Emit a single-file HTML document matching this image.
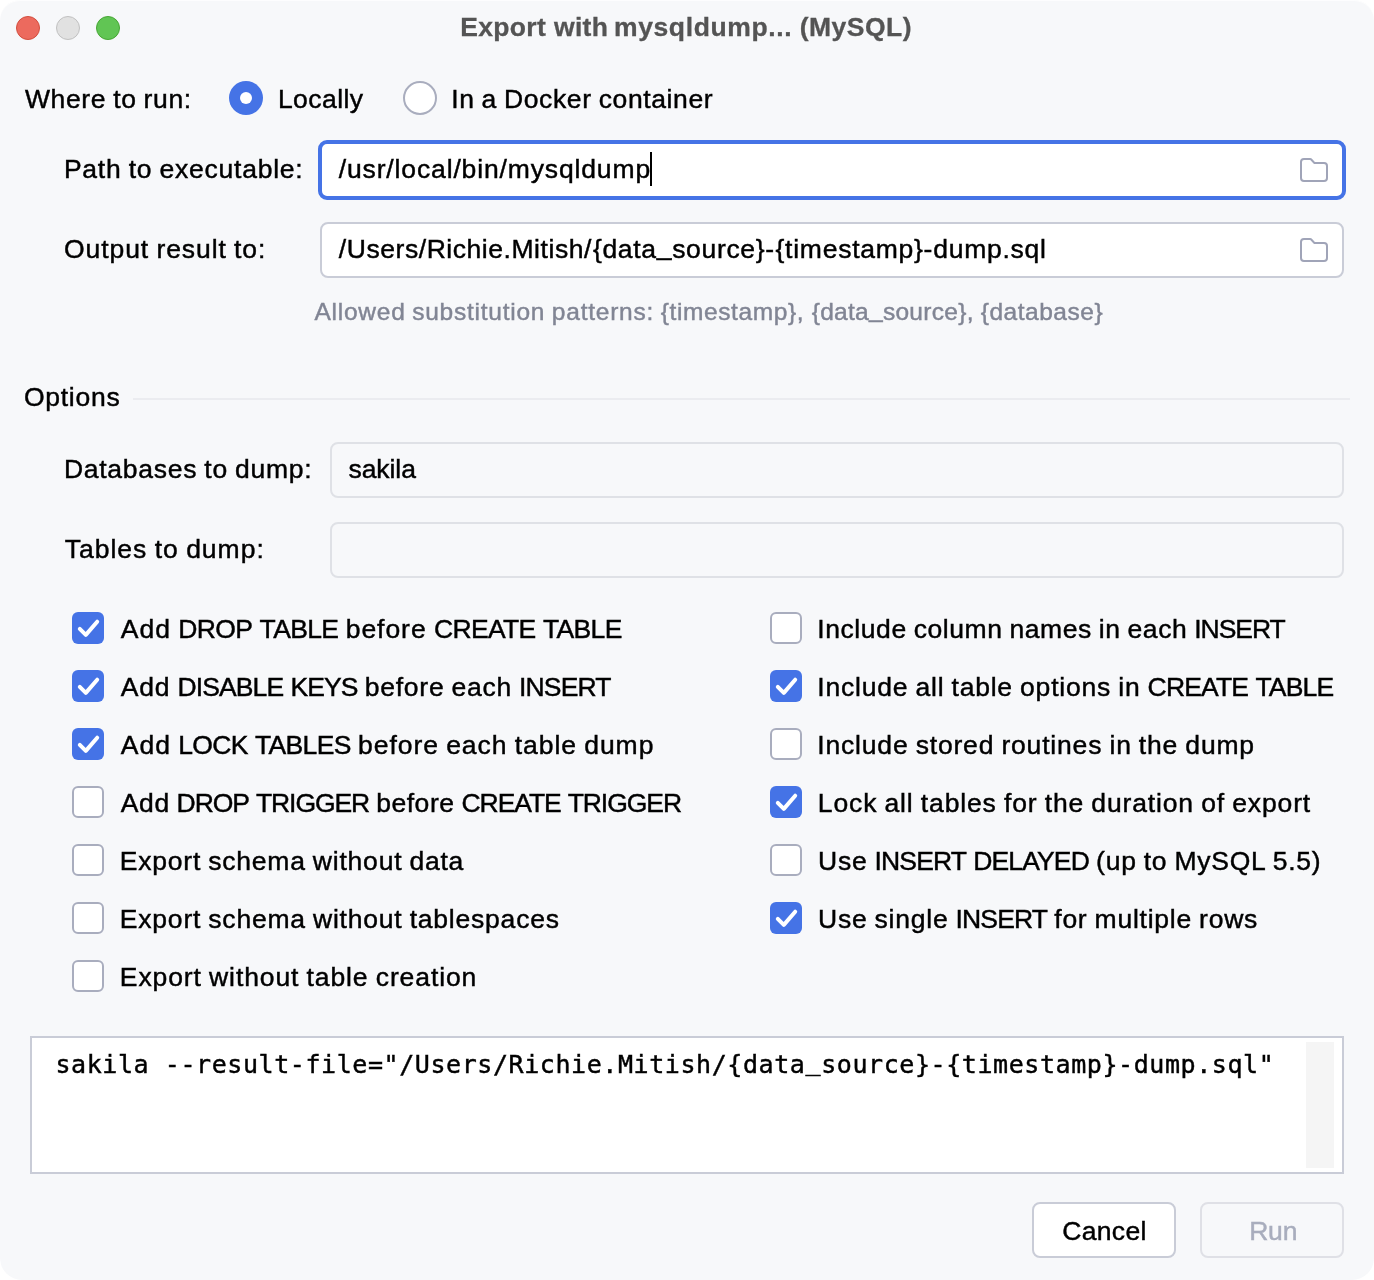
<!DOCTYPE html>
<html lang="en">
<head>
<meta charset="utf-8">
<title>Export with mysqldump... (MySQL)</title>
<style>
html,body{margin:0;padding:0;background:#fff;}
body{width:1374px;height:1280px;overflow:hidden;position:relative;font-family:"Liberation Sans", sans-serif;color:#000;}
#win{will-change:transform;position:absolute;left:0;top:0;width:1374px;height:1280px;background:#F7F8FA;border-radius:20px 20px 22px 22px;overflow:hidden;box-shadow:inset 0 1px 0 rgba(255,255,255,.75);}
.t{position:absolute;white-space:pre;line-height:40px;height:40px;margin:0;-webkit-text-stroke:0.45px currentColor;}
.t{font-size:26.5px;}
.c{letter-spacing:calc(var(--e,0px) + 0.81px);word-spacing:-0.99px;}
.c .u{letter-spacing:calc(var(--e,0px) - 0.80px);}
.m{font-family:"DejaVu Sans Mono", "Liberation Mono", monospace;font-size:25px;}
.title{font-size:26.5px;font-weight:700;color:#545454;-webkit-text-stroke:0.3px currentColor;}
.hint{font-size:24.5px;color:#818594;}
.hint.c{letter-spacing:calc(var(--e,0px) + 0.75px);word-spacing:-0.92px;}

.dis{color:#A8ADBD;}
.us{position:relative;top:-3px;}
.hint .us{top:-2.8px;}
.m .us{top:-3.3px;}
.dot{position:absolute;top:16px;width:24px;height:24px;border-radius:50%;box-sizing:border-box;}
.fld{position:absolute;box-sizing:border-box;border-radius:8px;}
.ic{position:absolute;}
.cb{position:absolute;width:32px;height:32px;box-sizing:border-box;border-radius:6px;background:#fff;border:2px solid #A9ADBE;}
.cb.on{background:#4573E6;border:none;}
.cb svg{display:block;}
.rad{position:absolute;width:34px;height:34px;box-sizing:border-box;border-radius:50%;}
.btn{position:absolute;top:1202px;width:144px;height:56px;box-sizing:border-box;border-radius:8px;}
</style>
</head>
<body>
<div id="win">

<!-- title bar: traffic lights -->
<div class="dot" style="left:16px;background:#EC6A5E;border:1px solid #D24E3E"></div>
<div class="dot" style="left:56px;background:#E1E1E1;border:1px solid #C0C0C0"></div>
<div class="dot" style="left:96px;background:#61C554;border:1px solid #47A634"></div>
<!-- where to run: radio buttons -->
<div class="rad" style="left:229px;top:81px;background:#4573E6"><div style="position:absolute;left:10.8px;top:10.8px;width:12.4px;height:12.4px;border-radius:50%;background:#fff"></div></div>
<div class="rad" style="left:403px;top:81px;background:#fff;border:2px solid #A9ADBE"></div>
<!-- path / output fields with browse icons -->
<div class="fld" style="left:318px;top:140px;width:1028px;height:60px;background:#fff;border:4px solid #4573E6;border-radius:9px"></div>
<div style="position:absolute;left:650px;top:152px;width:2px;height:34px;background:#000"></div>
<svg class="ic" style="left:1298px;top:154px" width="32" height="32" viewBox="0 0 16 16" fill="none"><path d="M8.106 4.346L8.253 4.5H13C13.828 4.5 14.5 5.172 14.5 6V12C14.5 12.828 13.828 13.5 13 13.5H3C2.172 13.5 1.5 12.828 1.5 12V4C1.5 3.172 2.172 2.5 3 2.5H6.122C6.258 2.5 6.388 2.555 6.482 2.654L8.106 4.346Z" stroke="#A0A4B8"/></svg>
<div class="fld" style="left:320px;top:222px;width:1024px;height:56px;background:#fff;border:2px solid #C9CCD7"></div>
<svg class="ic" style="left:1298px;top:234px" width="32" height="32" viewBox="0 0 16 16" fill="none"><path d="M8.106 4.346L8.253 4.5H13C13.828 4.5 14.5 5.172 14.5 6V12C14.5 12.828 13.828 13.5 13 13.5H3C2.172 13.5 1.5 12.828 1.5 12V4C1.5 3.172 2.172 2.5 3 2.5H6.122C6.258 2.5 6.388 2.555 6.482 2.654L8.106 4.346Z" stroke="#A0A4B8"/></svg>
<!-- options group -->
<div style="position:absolute;left:133px;top:398px;width:1217px;height:2px;background:#EBECF0"></div>
<div class="fld" style="left:330px;top:442px;width:1014px;height:56px;border:2px solid #DFE1E6"></div>
<div class="fld" style="left:330px;top:522px;width:1014px;height:56px;border:2px solid #DFE1E6"></div>
<!-- checkboxes -->
<div class="cb on" style="left:72px;top:612px"><svg width="32" height="32" viewBox="0 0 32 32" fill="none"><path d="M7.8 16.9L13.8 22.9L25.2 9.7" stroke="#fff" stroke-width="4" stroke-linecap="round" stroke-linejoin="round"/></svg></div>
<div class="cb on" style="left:72px;top:670px"><svg width="32" height="32" viewBox="0 0 32 32" fill="none"><path d="M7.8 16.9L13.8 22.9L25.2 9.7" stroke="#fff" stroke-width="4" stroke-linecap="round" stroke-linejoin="round"/></svg></div>
<div class="cb on" style="left:72px;top:728px"><svg width="32" height="32" viewBox="0 0 32 32" fill="none"><path d="M7.8 16.9L13.8 22.9L25.2 9.7" stroke="#fff" stroke-width="4" stroke-linecap="round" stroke-linejoin="round"/></svg></div>
<div class="cb" style="left:72px;top:786px"></div>
<div class="cb" style="left:72px;top:844px"></div>
<div class="cb" style="left:72px;top:902px"></div>
<div class="cb" style="left:72px;top:960px"></div>
<div class="cb" style="left:770px;top:612px"></div>
<div class="cb on" style="left:770px;top:670px"><svg width="32" height="32" viewBox="0 0 32 32" fill="none"><path d="M7.8 16.9L13.8 22.9L25.2 9.7" stroke="#fff" stroke-width="4" stroke-linecap="round" stroke-linejoin="round"/></svg></div>
<div class="cb" style="left:770px;top:728px"></div>
<div class="cb on" style="left:770px;top:786px"><svg width="32" height="32" viewBox="0 0 32 32" fill="none"><path d="M7.8 16.9L13.8 22.9L25.2 9.7" stroke="#fff" stroke-width="4" stroke-linecap="round" stroke-linejoin="round"/></svg></div>
<div class="cb" style="left:770px;top:844px"></div>
<div class="cb on" style="left:770px;top:902px"><svg width="32" height="32" viewBox="0 0 32 32" fill="none"><path d="M7.8 16.9L13.8 22.9L25.2 9.7" stroke="#fff" stroke-width="4" stroke-linecap="round" stroke-linejoin="round"/></svg></div>
<!-- command preview area -->
<div style="position:absolute;left:30px;top:1036px;width:1314px;height:138px;box-sizing:border-box;background:#fff;border:2px solid #C9CCD7"></div>
<div style="position:absolute;left:1306px;top:1042px;width:28px;height:126px;background:#F5F5F5"></div>
<!-- dialog buttons -->
<div class="btn" style="left:1032px;background:#fff;border:2px solid #C9CCD7"></div>
<div class="btn" style="left:1200px;border:2px solid #DFE0E6"></div>
<!-- text labels -->
<div class="t title" id="title1" style="left:460.13px;top:6.81px;letter-spacing:0.359px">Export with</div>
<div class="t title" id="title2" style="left:613.98px;top:6.81px;letter-spacing:0.615px">mysqldump...</div>
<div class="t title" id="title3" style="left:799.68px;top:6.81px;letter-spacing:0.483px">(MySQL)</div>
<div class="t c" id="where" style="left:24.95px;top:78.81px;--e:-0.171px">Where to run:</div>
<div class="t c" id="locally" style="left:277.88px;top:78.81px;--e:-0.352px">Locally</div>
<div class="t c" id="docker" style="left:451.27px;top:78.81px;--e:-0.185px">In a Docker container</div>
<div class="t c" id="pathl" style="left:63.88px;top:148.81px;--e:-0.036px">Path to executable:</div>
<div class="t c" id="pathv" style="left:338.77px;top:148.81px;--e:0.048px">/usr/local/bin/mysqldump</div>
<div class="t c" id="outl" style="left:64.00px;top:228.81px;--e:0.114px">Output result to:</div>
<div class="t c" id="outv1" style="left:338.87px;top:228.81px;--e:-0.261px">/Users/Richie.Mitish/</div>
<div class="t c" id="outv2" style="left:592.92px;top:228.81px;--e:-0.135px">{data<span class="us">_</span>source}-</div>
<div class="t c" id="outv3" style="left:775.54px;top:228.81px;--e:-0.068px">{timestamp}-dump.sql</div>
<div class="t hint c" id="hint1" style="left:314.45px;top:291.51px;--e:0.008px">Allowed substitution patterns:</div>
<div class="t hint c" id="hint2" style="left:660.75px;top:291.51px;--e:-0.154px">{timestamp},</div>
<div class="t hint c" id="hint3" style="left:811.71px;top:291.51px;--e:-0.466px">{data<span class="us">_</span>source},</div>
<div class="t hint c" id="hint4" style="left:980.75px;top:291.51px;--e:-0.232px">{database}</div>
<div class="t c" id="options" style="left:24.00px;top:376.81px;--e:-0.092px">Options</div>
<div class="t c" id="dbl" style="left:63.88px;top:448.81px;--e:-0.073px">Databases to dump:</div>
<div class="t c" id="dbv" style="left:348.50px;top:448.81px;--e:-0.873px">sakila</div>
<div class="t c" id="tbl" style="left:64.75px;top:528.81px;--e:0.183px">Tables to dump:</div>
<div class="t c" id="l0" style="left:120.87px;top:608.81px;--e:0.154px">Add <span class="u">DROP</span> <span class="u">TABLE</span> before <span class="u">CREATE</span> <span class="u">TABLE</span></div>
<div class="t c" id="l1" style="left:120.87px;top:666.81px;--e:-0.064px">Add <span class="u">DISABLE</span> <span class="u">KEYS</span> before each <span class="u">INSERT</span></div>
<div class="t c" id="l2" style="left:120.87px;top:724.81px;--e:0.137px">Add <span class="u">LOCK</span> <span class="u">TABLES</span> before each table dump</div>
<div class="t c" id="l3" style="left:120.87px;top:782.81px;--e:-0.258px">Add <span class="u">DROP</span> <span class="u">TRIGGER</span> before <span class="u">CREATE</span> <span class="u">TRIGGER</span></div>
<div class="t c" id="l4" style="left:119.85px;top:840.81px;--e:-0.031px">Export schema without data</div>
<div class="t c" id="l5" style="left:119.85px;top:898.81px;--e:-0.022px">Export schema without tablespaces</div>
<div class="t c" id="l6" style="left:119.85px;top:956.81px;--e:0.084px">Export without table creation</div>
<div class="t c" id="r0" style="left:817.27px;top:608.81px;--e:-0.237px">Include column names in each <span class="u">INSERT</span></div>
<div class="t c" id="r1" style="left:817.27px;top:666.81px;--e:-0.018px">Include all table options in <span class="u">CREATE</span> <span class="u">TABLE</span></div>
<div class="t c" id="r2" style="left:817.27px;top:724.81px;--e:0.009px">Include stored routines in the dump</div>
<div class="t c" id="r3" style="left:817.85px;top:782.81px;--e:0.050px">Lock all tables for the duration of export</div>
<div class="t c" id="r4" style="left:818.08px;top:840.81px;--e:-0.061px">Use <span class="u">INSERT</span> <span class="u">DELAYED</span> (up to MySQL 5.5)</div>
<div class="t c" id="r5" style="left:818.08px;top:898.81px;--e:-0.052px">Use single <span class="u">INSERT</span> for multiple rows</div>
<div class="t m" id="cmd" style="left:55.45px;top:1044.95px;letter-spacing:0.575px">sakila --result-file="/Users/Richie.Mitish/{data<span class="us">_</span>source}-{timestamp}-dump.sql"</div>
<div class="t c" id="cancel" style="left:1062.32px;top:1210.71px;--e:-0.506px">Cancel</div>
<div class="t dis c" id="run" style="left:1249.14px;top:1210.71px;--e:-0.991px">Run</div>
</div>
</body>
</html>
